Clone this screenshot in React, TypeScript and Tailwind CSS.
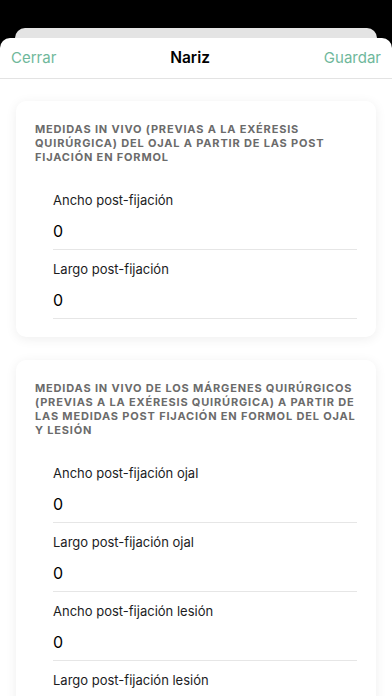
const FONT = "font-['Inter','Liberation_Sans',sans-serif]"

type Section = {
  title: string
  fields: string[]
}

const SECTIONS: Section[] = [
  {
    title: 'Medidas in vivo (previas a la exéresis quirúrgica) del ojal a partir de las post fijación en formol',
    fields: ['Ancho post-fijación', 'Largo post-fijación'],
  },
  {
    title:
      'Medidas in vivo de los márgenes quirúrgicos (previas a la exéresis quirúrgica) a partir de las medidas post fijación en formol del ojal y lesión',
    fields: [
      'Ancho post-fijación ojal',
      'Largo post-fijación ojal',
      'Ancho post-fijación lesión',
      'Largo post-fijación lesión',
    ],
  },
]

function Field({ label }: { label: string }) {
  return (
    <div className="pt-[10px] pb-[8px] border-b border-[#e6e6e6]">
      <div className="h-[18px] leading-[18px] text-[13px] text-[#1c1c1e]">{label}</div>
      <div className="mt-[12px] h-[20px] leading-[20px] text-[16px] text-black">0</div>
    </div>
  )
}

function SectionCard({ section }: { section: Section }) {
  return (
    <div className="rounded-[10px] bg-white shadow-[0_2px_12px_rgba(0,0,0,0.07)] pt-[21px] pb-[18px]">
      <h3 className="px-[19px] text-[11px] leading-[14px] font-bold uppercase tracking-[0.075em] text-[#6b6b6b]">
        {section.title}
      </h3>
      <div className="mt-[17px] ml-[37px] mr-[19px]">
        {section.fields.map((f) => (
          <Field key={f} label={f} />
        ))}
      </div>
    </div>
  )
}

export default function App() {
  return (
    <div className={`${FONT} h-[696px] w-full overflow-hidden bg-black flex flex-col`}>
      <div className="pt-[28px] px-[15px]">
        <div className="h-[10px] rounded-t-[10px] bg-[#e4e4e4]" />
      </div>
      <div className="flex-1 rounded-t-[10px] bg-white">
        <header className="h-[41px] flex items-center justify-between px-[11px] border-b border-[#e3e3e3]">
          <button className="text-[15px] text-[#6fb89b]">Cerrar</button>
          <h1 className="text-[15.5px] font-semibold text-black">Nariz</h1>
          <button className="text-[15px] text-[#6fb89b]">Guardar</button>
        </header>
        <div className="px-[16px] pt-[22px] flex flex-col gap-[23px]">
          {SECTIONS.map((s) => (
            <SectionCard key={s.title} section={s} />
          ))}
        </div>
      </div>
    </div>
  )
}
